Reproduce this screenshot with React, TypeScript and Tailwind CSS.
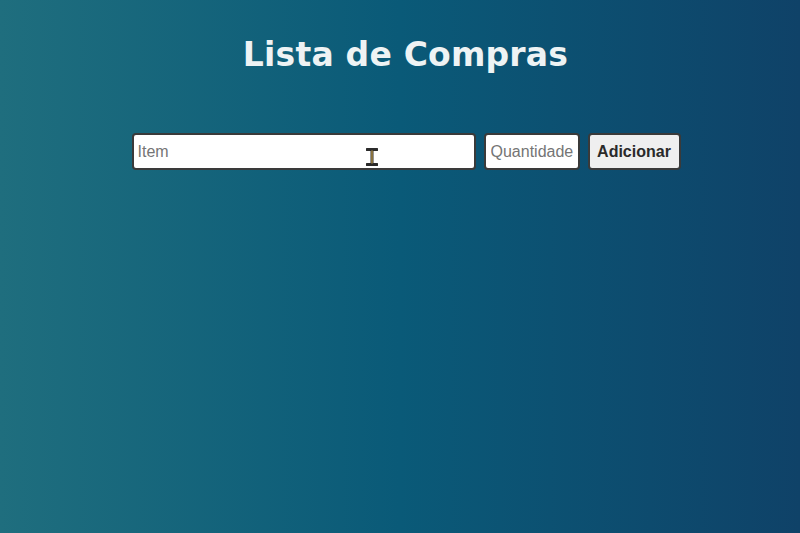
export default function App() {
    return (
        <div className="relative min-h-[533px] w-full bg-[linear-gradient(to_right,#1f6e7e,#0a5a78_50%,#0f4268)] pt-[33px] font-['Liberation_Sans',Arial,sans-serif]">
            <h1 className="pl-[11px] text-center font-['DejaVu_Sans',sans-serif] text-[33px] leading-[44px] font-bold tracking-[0.2px] text-[#eef3f4]">
                Lista de Compras
            </h1>
            <form className="mt-[56px] flex justify-center gap-2 pl-[12px]">
                <input
                    type="text"
                    placeholder="Item"
                    className="h-[37px] w-[344px] rounded-[4px] border-2 border-[#3a3a3a] bg-white px-[4px] text-[16px] text-[#222] placeholder:text-[#757575] outline-none"
                />
                <input
                    type="text"
                    placeholder="Quantidade"
                    className="h-[37px] w-[96px] rounded-[4px] border-2 border-[#3a3a3a] bg-white pl-[5px] pr-0 text-[16px] text-[#222] placeholder:text-[#757575] outline-none"
                />
                <button
                    type="button"
                    className="h-[37px] w-[93px] rounded-[4px] border-2 border-[#3a3a3a] bg-[#efefef] text-[16px] font-bold text-[#2a2a2a]"
                >
                    Adicionar
                </button>
            </form>
            {/* mouse cursor in the screenshot */}
            <svg className="absolute left-[366px] top-[148px]" width="12" height="18" viewBox="0 0 12 18">
                <path d="M1 1.5h10M1 16.5h10M6 1.5v15" stroke="#2b2b2b" strokeWidth="3" strokeLinecap="round" />
                <path d="M6 2.5v13" stroke="#c9a24a" strokeWidth="1.2" />
            </svg>
        </div>
    );
}
